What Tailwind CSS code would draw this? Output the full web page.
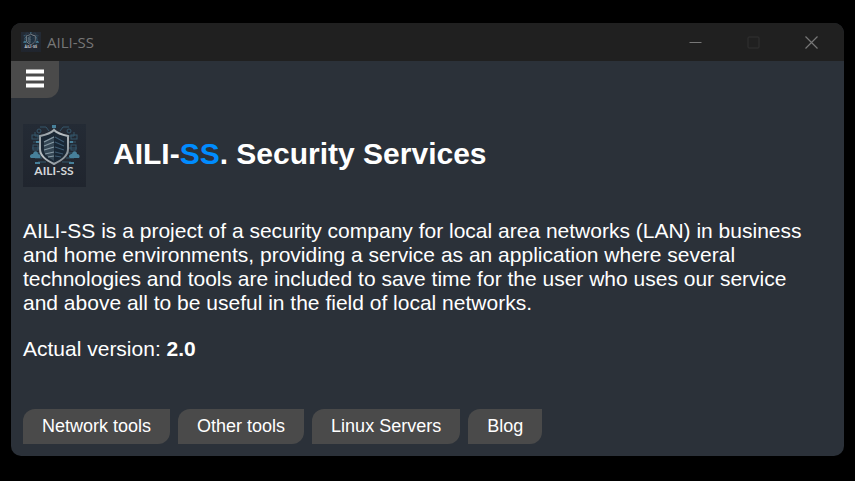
<!DOCTYPE html>
<html lang="en">
<head>
<meta charset="utf-8">
<meta name="viewport" content="width=device-width, initial-scale=1">
<title>AILI-SS</title>
<script src="https://cdn.jsdelivr.net/npm/@tailwindcss/browser@4"></script>
</head>
<body class="bg-black font-['Liberation_Sans',Arial,sans-serif] text-white">
<svg class="absolute size-0" aria-hidden="true">
  <defs>
    <linearGradient id="metal" x1="0" y1="0" x2="1" y2="1"><stop offset="0" stop-color="#8e979d"/><stop offset=".45" stop-color="#b9c0c4"/><stop offset="1" stop-color="#7a848b"/></linearGradient>
    <linearGradient id="back" x1="0" y1="0" x2="0" y2="1"><stop offset="0" stop-color="#242b35"/><stop offset="1" stop-color="#20252e"/></linearGradient>
    <symbol id="logo" viewBox="0 0 63 63">
      <rect width="63" height="63" fill="url(#back)"/>
      <g fill="none" stroke="#35566b" stroke-width="1">
        <path d="M31 6V2M26 7l-3-4h-6M37 7l3-4h6M17 12h-5V8M46 12h5V8M16 18h-6M46 18h7M16 24H9M46 24h8M17 29h-6M45 29h7M19 34h-7M43 34h8M23 38h-8M39 38h9"/>
        <rect x="9" y="11" width="6" height="4"/><rect x="48" y="11" width="6" height="4"/>
        <rect x="10" y="21" width="5" height="5"/><rect x="48" y="21" width="5" height="5"/>
        <circle cx="16" cy="7" r="2"/><circle cx="46" cy="7" r="2"/>
      </g>
      <g fill="#47809a">
        <path d="M7 33c0-3 2-3 3-3 1-4 5-3 5 0 3 0 3 3 2 4H8zM46 33c0-3 2-3 3-3 1-4 5-3 5 0 3 0 3 3 2 4h-9z"/>
        <rect x="29" y="1" width="4" height="3"/><rect x="13" y="17" width="3" height="2"/><rect x="47" y="17" width="3" height="2"/>
        <rect x="12" y="38" width="5" height="2"/><rect x="46" y="38" width="5" height="2"/>
      </g>
      <path d="M31 6c4 4 9 5 14 6v13c0 7-6 11-14 15-8-4-14-8-14-15V12c5-1 10-2 14-6z" fill="#1b2835" stroke="url(#metal)" stroke-width="2"/>
      <path d="M21 17l10-5v25l-6-4-4-5z" fill="#354755"/>
      <path d="M31 12l10 5v11l-4 5-6 4z" fill="#182634"/>
      <path d="M21 18l10-5M21 22l10-4M21 26l10-3M22 30l9-2M25 33l6-1" stroke="#879aa5" stroke-width="1.2"/>
      <path d="M32 13l9 5M32 18l9 4M32 23l9 3M32 28l8 2M32 32l6 1" stroke="#3c5970" stroke-width="1.2"/>
      <text x="31" y="51" text-anchor="middle" font-family="Lato, sans-serif" font-weight="700" font-size="12" fill="#d3d6d8">AILI-SS</text>
    </symbol>
  </defs>
</svg>
<div class="flex min-h-screen flex-col px-[11px] pt-[23px] pb-[25px]">
  <div class="flex grow flex-col overflow-hidden rounded-[10px] bg-[#2b3139]">
    <header class="flex h-[38px] items-center bg-[#202020] pl-[10px]">
      <svg class="size-5" aria-hidden="true"><use href="#logo"/></svg>
      <span class="ml-1.5 font-['Open_Sans',sans-serif] text-[15px] text-[#777777]">AILI-SS</span>
      <div class="ml-auto flex h-full pr-1 text-[#777777]">
        <button type="button" aria-label="Minimize" class="flex w-[58px] items-center justify-center"><svg class="size-[13px]" viewBox="0 0 13 13" fill="none" stroke="currentColor"><path d="M.5 6.5h12"/></svg></button>
        <button type="button" aria-label="Maximize" disabled class="flex w-[58px] items-center justify-center text-[#303030]"><svg class="size-[13px]" viewBox="0 0 13 13" fill="none" stroke="currentColor"><rect x="1" y="1" width="11" height="11" rx="1"/></svg></button>
        <button type="button" aria-label="Close" class="flex w-[58px] items-center justify-center"><svg class="size-[13px]" viewBox="0 0 13 13" fill="none" stroke="currentColor" stroke-width="1.2"><path d="M.5.5l12 12M12.500.5l-12 12"/></svg></button>
      </div>
    </header>
    <button type="button" aria-label="Menu" class="flex h-[37px] w-12 justify-center rounded-br-[12px] bg-[#4a4a4a] pt-2">
      <svg class="h-5 w-[18px]" viewBox="0 0 18 20" fill="white"><path d="M0 .5h18v4H0zM0 7.500h18v4H0zM0 14.500h18v4H0z"/></svg>
    </button>
    <main class="flex grow flex-col px-3 pt-[26px] pb-3">
      <div class="flex items-center gap-[27px]">
        <svg class="size-[63px] shrink-0" role="img" aria-label="AILI-SS logo"><use href="#logo"/></svg>
        <h1 class="pb-1 text-[30px] leading-9 font-bold">AILI-<span class="text-[#008cff]">SS</span>. Security Services</h1>
      </div>
      <p class="mt-8 pr-6 text-[21px] leading-6">AILI-SS is a project of a security company for local area networks (LAN) in business and home environments, providing a service as an application where several technologies and tools are included to save time for the user who uses our service and above all to be useful in the field of local networks.</p>
      <p class="mt-[22px] text-[21px] leading-6">Actual version: <b>2.0</b></p>
      <nav class="mt-auto flex gap-2 text-[18px] leading-[35px]">
        <a href="#network" class="rounded-tl-[12px] rounded-br-[12px] bg-[#4a4a4a] px-[19px]">Network tools</a>
        <a href="#other" class="rounded-tl-[12px] rounded-br-[12px] bg-[#4a4a4a] px-[19px]">Other tools</a>
        <a href="#linux" class="rounded-tl-[12px] rounded-br-[12px] bg-[#4a4a4a] px-[19px]">Linux Servers</a>
        <a href="#blog" class="rounded-tl-[12px] rounded-br-[12px] bg-[#4a4a4a] px-[19px]">Blog</a>
      </nav>
    </main>
  </div>
</div>
</body>
</html>
